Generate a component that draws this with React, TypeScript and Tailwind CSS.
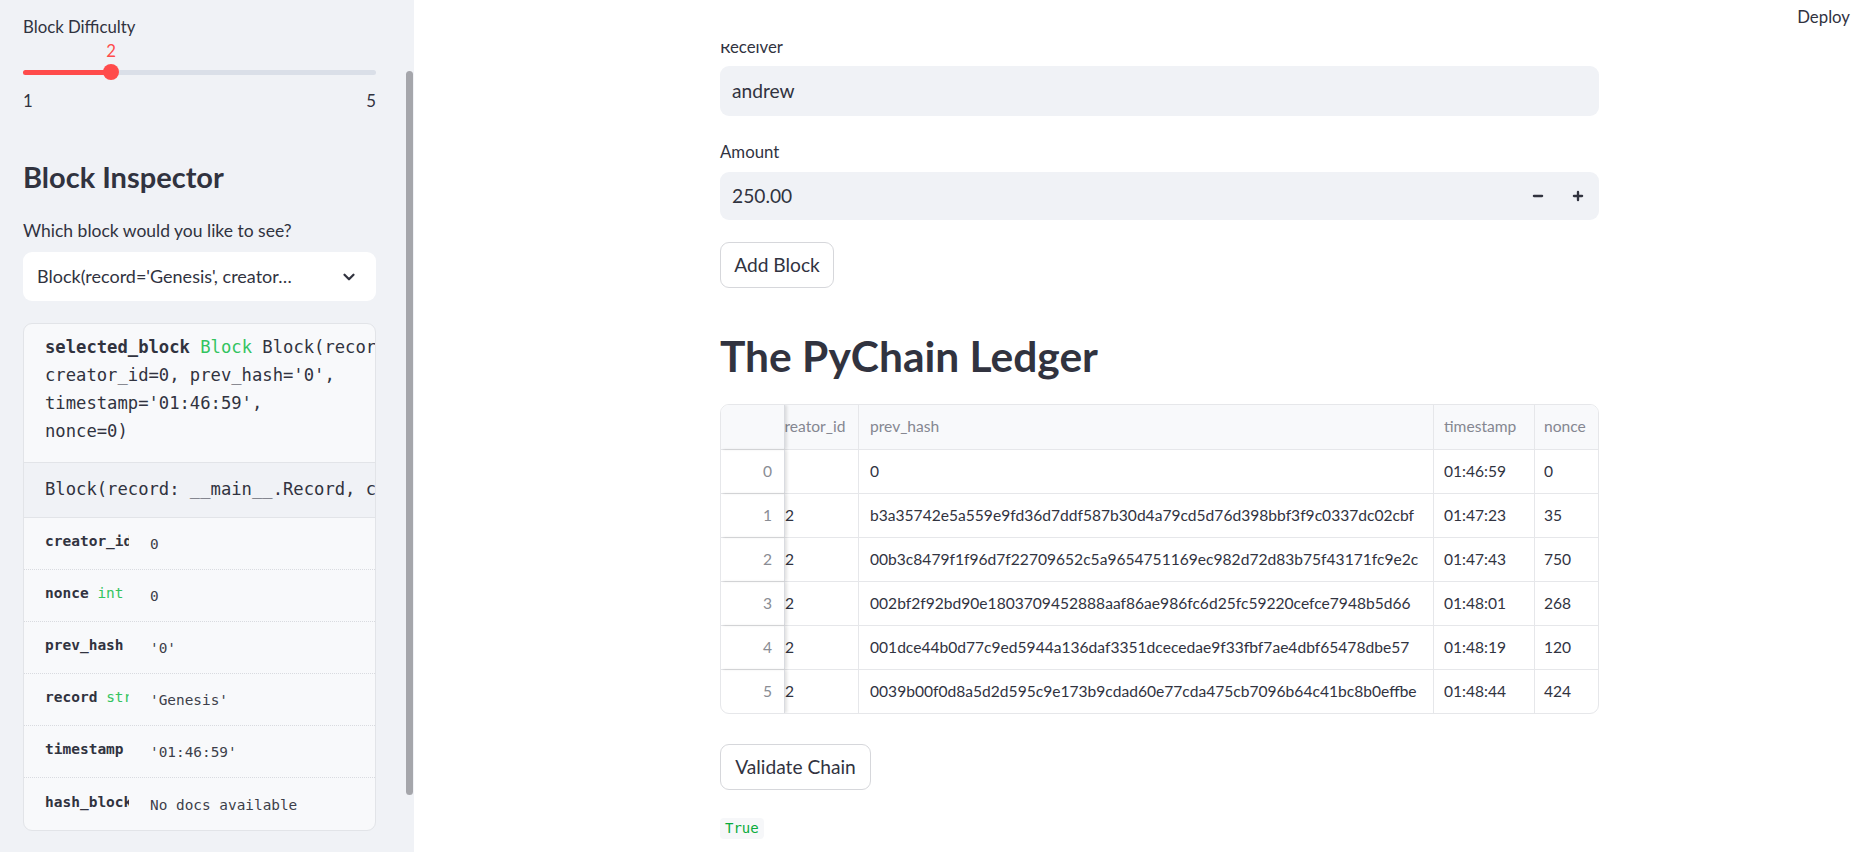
import { ChevronDown, Minus, Plus } from "lucide-react";

const mono = "font-['DejaVu_Sans_Mono','Liberation_Mono',monospace]";

const fields = [
  { name: "creator_id", type: "int", value: "0" },
  { name: "nonce", type: "int", value: "0" },
  { name: "prev_hash", type: "str", value: "'0'" },
  { name: "record", type: "str", value: "'Genesis'" },
  { name: "timestamp", type: "str", value: "'01:46:59'" },
  { name: "hash_block", type: "", value: "No docs available" },
];

const ledger = [
  { idx: 0, creator: "", hash: "0", ts: "01:46:59", nonce: "0" },
  { idx: 1, creator: "2", hash: "b3a35742e5a559e9fd36d7ddf587b30d4a79cd5d76d398bbf3f9c0337dc02cbf", ts: "01:47:23", nonce: "35" },
  { idx: 2, creator: "2", hash: "00b3c8479f1f96d7f22709652c5a9654751169ec982d72d83b75f43171fc9e2c", ts: "01:47:43", nonce: "750" },
  { idx: 3, creator: "2", hash: "002bf2f92bd90e1803709452888aaf86ae986fc6d25fc59220cefce7948b5d66", ts: "01:48:01", nonce: "268" },
  { idx: 4, creator: "2", hash: "001dce44b0d77c9ed5944a136daf3351dcecedae9f33fbf7ae4dbf65478dbe57", ts: "01:48:19", nonce: "120" },
  { idx: 5, creator: "2", hash: "0039b00f0d8a5d2d595c9e173b9cdad60e77cda475cb7096b64c41bc8b0effbe", ts: "01:48:44", nonce: "424" },
];

const cols = "grid grid-cols-[64px_74px_575px_101px_1fr]";

function Sidebar() {
  return (
    <aside className="relative flex h-full w-[414px] shrink-0 flex-col bg-[#f0f2f6] pl-[23px] pr-[38px] pt-[15px]">
      <div className="text-[16.8px] leading-[24px]">Block Difficulty</div>

      {/* slider */}
      <div className="relative mt-[2px] h-[20px]">
        <span className="absolute left-[88px] -translate-x-1/2 text-[16.8px] leading-[20px] text-[#ff4b4b]">2</span>
      </div>
      <div className="relative mt-[9px] h-[5px] rounded-full bg-[#dadfe8]">
        <div className="h-full w-[88px] rounded-full bg-[#ff4b4b]" />
        <div className="absolute left-[80px] top-[-6px] h-[16px] w-[16px] rounded-full bg-[#ff4b4b]" />
      </div>
      <div className="mt-[17px] flex justify-between text-[16.8px] leading-[18px]">
        <span>1</span>
        <span>5</span>
      </div>

      <h2 className="mt-[49px] text-[29px] font-bold leading-[36px]">Block Inspector</h2>
      <div className="mt-[24px] text-[17.5px] leading-[24px]">Which block would you like to see?</div>

      <div className="mt-[9px] flex h-[49px] items-center justify-between rounded-[9px] bg-white pl-[14px] pr-[18px]">
        <span className="text-[18px]">Block(record='Genesis', creator…</span>
        <ChevronDown size={18} strokeWidth={3} />
      </div>

      {/* help card */}
      <div className={`mt-[22px] h-[508px] overflow-hidden rounded-[9px] border border-[#e2e4e8] bg-[#f8f9fb] ${mono}`}>
        <div className="whitespace-pre border-b border-[#e2e4e8] pb-[17px] pl-[21px] pt-[9px] text-[17.2px] leading-[28px]">
          <div>
            <span className="font-bold">selected_block</span> <span className="text-[#33c45f]">Block</span> Block(record='Genesis',
          </div>
          <div>creator_id=0, prev_hash='0',</div>
          <div>timestamp='01:46:59',</div>
          <div>nonce=0)</div>
        </div>
        <div className="flex h-[55px] items-center whitespace-pre border-b border-[#e2e4e8] bg-[#f0f2f6] pl-[21px] text-[17.2px]">
          Block(record: __main__.Record, creator_id: int, prev_hash: str = '0')
        </div>
        {fields.map((f, i) => (
          <div
            key={f.name}
            className={`flex h-[52px] items-center pl-[21px] ${i < fields.length - 1 ? "border-b border-dotted border-[#d9dbe0]" : ""}`}
          >
            <div className="mb-[3px] w-[84px] shrink-0 overflow-hidden whitespace-nowrap text-[14.5px]">
              <span className="font-bold">{f.name}</span>
              {f.type && <span className="text-[#33c45f]"> {f.type}</span>}
            </div>
            <div className="ml-[21px] mt-[3px] whitespace-nowrap text-[14.4px] text-[#3d3f4a]">{f.value}</div>
          </div>
        ))}
      </div>

      {/* scrollbar thumb */}
      <div className="absolute left-[406px] top-[71px] h-[724px] w-[7px] rounded-full bg-[#a5a6ab]" />
    </aside>
  );
}

function Ledger() {
  return (
    <div className="mt-[22px] overflow-hidden rounded-[9px] border border-[#e6e7ea] text-[15.6px]">
      <div className={`${cols} h-[44px] bg-[#f8f9fb] text-[#858791]`}>
        <div className="relative z-10 border-r border-[#d9dbe0] shadow-[2px_0_3px_rgba(0,0,0,0.12)]" />
        <div className="flex items-center overflow-hidden whitespace-nowrap border-r border-[#e6e7ea]">
          <span className="-ml-[8px]">creator_id</span>
        </div>
        <div className="flex items-center border-r border-[#e6e7ea] px-[11px]">prev_hash</div>
        <div className="flex items-center border-r border-[#e6e7ea] px-[10px]">timestamp</div>
        <div className="flex items-center px-[9px]">nonce</div>
      </div>
      {ledger.map((r) => (
        <div key={r.idx} className={`${cols} h-[44px] border-t border-[#e6e7ea]`}>
          <div className="relative z-10 flex items-center justify-end border-r border-[#d9dbe0] pr-[12px] text-[#8a8d94] shadow-[2px_0_3px_rgba(0,0,0,0.12)]">
            {r.idx}
          </div>
          <div className="flex items-center overflow-hidden border-r border-[#e6e7ea]">{r.creator}</div>
          <div className="flex items-center overflow-hidden whitespace-nowrap border-r border-[#e6e7ea] px-[11px]">{r.hash}</div>
          <div className="flex items-center border-r border-[#e6e7ea] px-[10px]">{r.ts}</div>
          <div className="flex items-center px-[9px]">{r.nonce}</div>
        </div>
      ))}
    </div>
  );
}

export default function App() {
  return (
    <div className="flex h-[852px] w-[1875px] overflow-hidden bg-white font-['Lato','Noto_Sans',sans-serif] text-[#31333f]">
      <Sidebar />
      <main className="relative h-full flex-1 overflow-hidden">
        <header className="absolute left-0 right-0 top-0 z-20 flex h-[44px] items-start justify-end bg-white pr-[25px] pt-[5px]">
          <span className="text-[16.8px] leading-[24px]">Deploy</span>
        </header>

        <div className="ml-[306px] flex w-[879px] flex-col pt-[34px]">
          <label className="h-[26px] text-[16.8px] leading-[26px]">Receiver</label>
          <div className="mt-[6px] flex h-[50px] items-center rounded-[9px] bg-[#f0f2f6] px-[12px] text-[19.2px]">andrew</div>

          <label className="mt-[23px] h-[26px] text-[16.8px] leading-[26px]">Amount</label>
          <div className="mt-[7px] flex h-[48px] items-center justify-between rounded-[9px] bg-[#f0f2f6] pl-[12px] pr-[14px] text-[19.2px]">
            <span>250.00</span>
            <div className="flex items-center gap-[26px]">
              <Minus size={14} strokeWidth={4} />
              <Plus size={14} strokeWidth={4} />
            </div>
          </div>

          <button className="mt-[22px] h-[46px] w-[114px] rounded-[9px] border border-[#d6d7db] bg-white text-[19.2px]">
            Add Block
          </button>

          <h1 className="mt-[42px] text-[42.5px] font-bold leading-[52px]">The PyChain Ledger</h1>

          <Ledger />

          <button className="mt-[30px] h-[46px] w-[151px] rounded-[9px] border border-[#d6d7db] bg-white text-[19.2px]">
            Validate Chain
          </button>

          <div className="mt-[25px]">
            <code className={`inline-block h-[21px] rounded-[4px] bg-[#f6f7f9] px-[5px] text-[14px] leading-[21px] text-[#09ab3b] ${mono}`}>
              True
            </code>
          </div>
        </div>
      </main>
    </div>
  );
}
